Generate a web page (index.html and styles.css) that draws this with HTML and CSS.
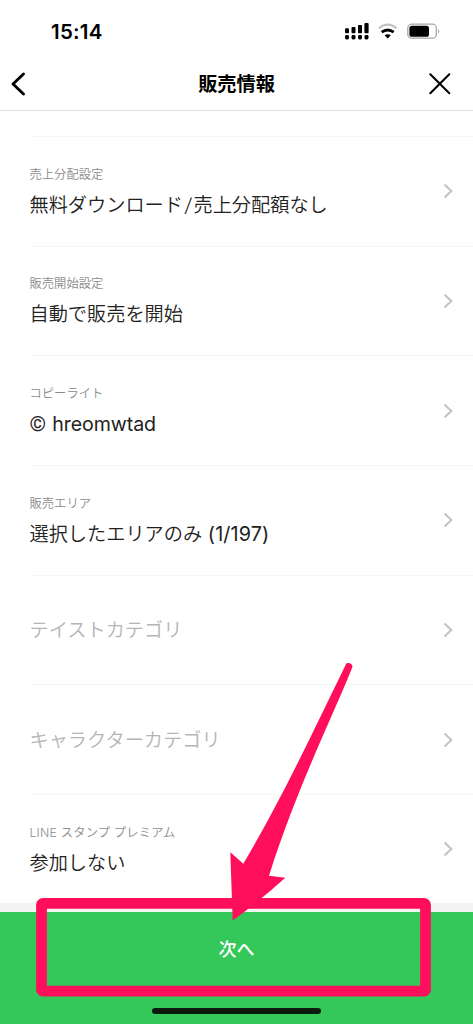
FILE: index.html
```
<!DOCTYPE html>
<html lang="ja">
<head>
<meta charset="utf-8">
<title>販売情報</title>
<link rel="stylesheet" href="styles.css">
</head>
<body>
<div class="screen">
  <div class="status">
    <span class="time">15:14</span>
    <svg class="status-icons" width="98" height="20" viewBox="0 0 98 20">
      <g fill="#000">
        <rect x="1" y="6.2" width="4" height="5" rx="1"/><rect x="7.5" y="5" width="4" height="6.2" rx="1"/><rect x="14" y="3" width="4" height="8.2" rx="1"/><rect x="20.4" y="1" width="4.2" height="10.2" rx="1"/>
        <rect x="1" y="13" width="4" height="4.4" rx="1.4"/><rect x="7.5" y="13" width="4" height="4.4" rx="1.4"/><rect x="14" y="13" width="4" height="4.4" rx="1.4"/><rect x="20.5" y="13" width="4" height="4.4" rx="1.4"/>
        <path d="M40.6 13.3Q43.7 11.3 46.8 13.3L43.7 16.6Z"/>
      </g>
      <path d="M34.8 6.2Q43.7 -1 52.6 6.2" fill="none" stroke="#c4c4c4" stroke-width="2.3"/>
      <path d="M37.7 10.2Q43.7 5.7 49.7 10.2" fill="none" stroke="#000" stroke-width="2.8"/>
      <rect x="63.8" y="2.2" width="28.6" height="14" rx="4" fill="#fff" stroke="#a6a6a6" stroke-width="1.3"/>
      <rect x="65.4" y="3.8" width="19.6" height="11" rx="2.6"/>
      <path d="M94.2 7Q96.4 9.4 94.2 11.8Z" fill="#999"/>
    </svg>
  </div>
  <header class="nav">
    <svg width="16" height="26" viewBox="0 0 16 26"><path d="M13.5 3L3 13 13.5 23" fill="none" stroke="#000" stroke-width="2.9" stroke-linecap="round" stroke-linejoin="round"/></svg>
    <h1 class="title">販売情報</h1>
    <svg width="22" height="22" viewBox="0 0 22 22"><path d="M1.3 1.3L20.3 20.3M20.3 1.3L1.3 20.3" stroke="#000" stroke-width="2" stroke-linecap="round"/></svg>
  </header>
  <main class="list">
    <div class="row"><div class="text"><div class="label">売上分配設定</div><div class="value">無料ダウンロード<span class="slash">/</span>売上分配額なし</div></div><svg class="chev" viewBox="0 0 10 16"><path d="M1.5 1.5L8.3 8 1.5 14.5"/></svg></div>
    <div class="row"><div class="text"><div class="label">販売開始設定</div><div class="value">自動で販売を開始</div></div><svg class="chev" viewBox="0 0 10 16"><path d="M1.5 1.5L8.3 8 1.5 14.5"/></svg></div>
    <div class="row"><div class="text"><div class="label">コピーライト</div><div class="value latin"><span class="copy">©</span> hreomwtad</div></div><svg class="chev" viewBox="0 0 10 16"><path d="M1.5 1.5L8.3 8 1.5 14.5"/></svg></div>
    <div class="row"><div class="text"><div class="label">販売エリア</div><div class="value">選択したエリアのみ<span class="area"> (1/197)</span></div></div><svg class="chev" viewBox="0 0 10 16"><path d="M1.5 1.5L8.3 8 1.5 14.5"/></svg></div>
    <div class="row"><div class="value empty">テイストカテゴリ</div><svg class="chev" viewBox="0 0 10 16"><path d="M1.5 1.5L8.3 8 1.5 14.5"/></svg></div>
    <div class="row"><div class="value empty">キャラクターカテゴリ</div><svg class="chev" viewBox="0 0 10 16"><path d="M1.5 1.5L8.3 8 1.5 14.5"/></svg></div>
    <div class="row"><div class="text"><div class="label premium">LINE スタンプ プレミアム</div><div class="value">参加しない</div></div><svg class="chev" viewBox="0 0 10 16"><path d="M1.5 1.5L8.3 8 1.5 14.5"/></svg></div>
  </main>
  <footer class="footer">
    <div class="next">次へ</div>
    <div class="home"></div>
  </footer>
  <svg class="callout" viewBox="0 0 473 1024">
    <rect x="41.5" y="903.4" width="384" height="87.8" rx="1.5" fill="none" stroke="#ff0f5b" stroke-width="10.8"/>
    <path fill="#ff0f5b" d="M345.8 664.4C347.2 661.5 353.5 663.6 352.3 667.2C330 723 298 785 269 875.7L285.3 877.7Q262 899 232.7 920.5L230.3 852.3L243.3 863.7C281 800 310 738 345.8 664.4Z"/>
  </svg>
</div>
</body>
</html>
```
FILE: styles.css
```
body { margin: 0; background: #fff; }
.screen {
  position: relative;
  display: flex;
  flex-direction: column;
  width: 473px;
  height: 1024px;
  overflow: hidden;
  background: #fff;
  color: #222;
  font-family: Inter, "Noto Sans CJK JP", sans-serif;
}
.status {
  display: flex;
  justify-content: space-between;
  align-items: center;
  box-sizing: border-box;
  height: 58px;
  padding: 6px 31px 0 51px;
  color: #000;
}
.time { font-size: 20.5px; font-weight: 600; line-height: 24px; letter-spacing: .25px; }
.nav {
  display: flex;
  justify-content: space-between;
  align-items: center;
  box-sizing: border-box;
  height: 53px;
  padding: 0 22px 1px 10px;
  border-bottom: 1px solid #dedede;
  color: #000;
}
.title { margin: 1px 0 0 18px; font-size: 19.2px; font-weight: 600; line-height: 28px; }
.list {
  height: 792px;
  padding: 25px 0 0 29.5px;
  box-sizing: border-box;
  overflow: hidden;
  flex: none;
}
.row {
  display: flex;
  justify-content: space-between;
  align-items: center;
  box-sizing: border-box;
  height: 109.65px;
  padding: 0 20px 0 0;
  border-top: 1px solid #f5f5f5;
}
.text { padding-top: 3px; }
.label {
  margin-bottom: 4px;
  color: #8c8c8c;
  font-size: 12.3px;
  font-weight: 350;
  line-height: 20px;
  white-space: pre;
}
.premium { letter-spacing: .18px; }
.value { font-size: 19.2px; font-weight: 350; line-height: 32px; white-space: pre; }
.slash { display: inline-block; width: 10.5px; text-align: center; transform: skewX(-6deg); }
.latin { font-size: 19.6px; font-weight: 400; letter-spacing: -.1px; }
.copy { margin-right: 1px; font-family: Roboto, Inter, sans-serif; font-size: 21px; line-height: 1; }
.area { font-size: 19.8px; font-weight: 400; letter-spacing: .1px; }
.empty { color: #b5b5b5; padding-top: 1px; }
.chev { width: 10px; height: 16px; fill: none; stroke: #c4c4c4; stroke-width: 2.1; }
.footer {
  display: flex;
  flex-direction: column;
  align-items: center;
  flex: 1;
  box-sizing: border-box;
  border-top: 9px solid #f4f4f4;
  background: #34c759;
}
.next { margin-top: 24px; color: #fff; font-size: 18px; font-weight: 500; line-height: 28px; }
.home { width: 169px; height: 6px; margin-top: 44px; border-radius: 3px; background: #0a1a0e; }
.callout { position: absolute; inset: 0; width: 473px; height: 1024px; }
```
